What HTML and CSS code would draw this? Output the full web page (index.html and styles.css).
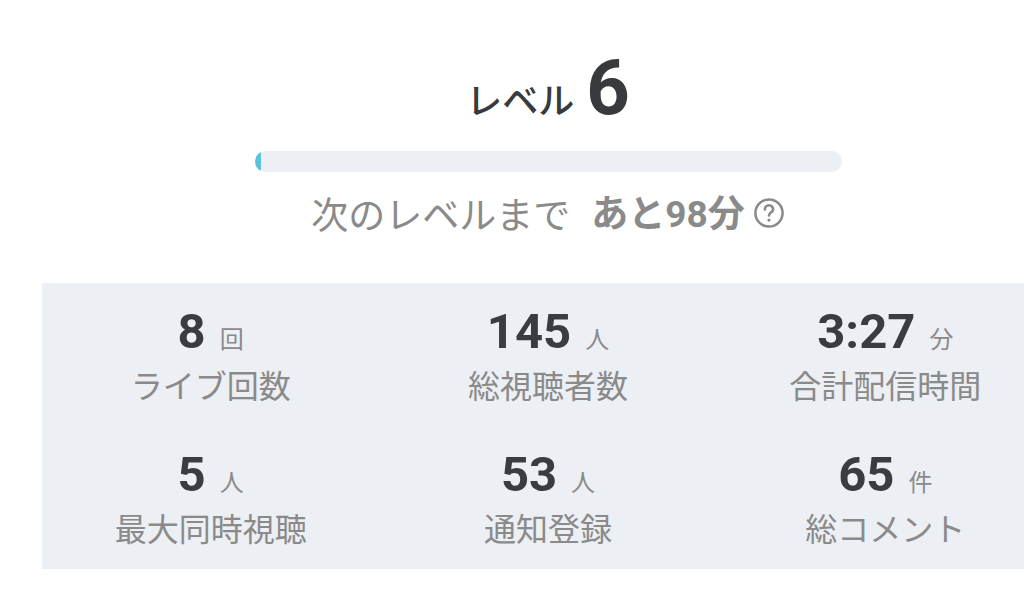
FILE: index.html
```html
<!DOCTYPE html>
<html lang="ja">
  <head>
    <meta charset="UTF-8" />
    <meta name="viewport" content="width=device-width, initial-scale=1.0" />
    <title>レベル</title>
    <link rel="stylesheet" href="styles.css">
  </head>
  <body>
    <div id="page">
      <h1 class="level"><span class="level-label">レベル</span><span class="level-num">6</span></h1>
      <div class="bar"><div class="bar-fill" style="width: 1%"></div></div>
      <p class="next">
        次のレベルまで<b>あと<span class="num">98</span>分</b>
        <svg class="help" viewBox="0 0 24 24" width="32" height="32">
          <circle cx="12" cy="12" r="10.2" fill="none" stroke="#8a8a8a" stroke-width="1.9"/>
          <path d="M8.9 9.3a3.1 3.1 0 0 1 6.2 0c0 2.1-3.1 2.3-3.1 4.6" fill="none" stroke="#8a8a8a" stroke-width="2" stroke-linecap="round"/>
          <circle cx="12" cy="17.3" r="1.2" fill="#8a8a8a"/>
        </svg>
      </p>
      <div class="stats">
        <div class="stat"><div class="value"><span class="num">8</span><span class="unit">回</span></div><div class="label">ライブ回数</div></div>
        <div class="stat"><div class="value"><span class="num">145</span><span class="unit">人</span></div><div class="label">総視聴者数</div></div>
        <div class="stat"><div class="value"><span class="num">3:27</span><span class="unit">分</span></div><div class="label">合計配信時間</div></div>
        <div class="stat"><div class="value"><span class="num">5</span><span class="unit">人</span></div><div class="label">最大同時視聴</div></div>
        <div class="stat"><div class="value"><span class="num">53</span><span class="unit">人</span></div><div class="label">通知登録</div></div>
        <div class="stat"><div class="value"><span class="num">65</span><span class="unit">件</span></div><div class="label">総コメント</div></div>
      </div>
    </div>
  </body>
</html>
```

FILE: styles.css
```css
body {
  margin: 0;
  background-color: #fff;
  overflow: hidden;
  font-family: "Noto Sans CJK JP", sans-serif;
}
#page {
  width: 1096px;
  display: flex;
  flex-direction: column;
  align-items: center;
  padding-top: 50px;
}
.level {
  margin: 0;
  display: flex;
  align-items: baseline;
  gap: 12px;
  color: #383a3d;
  line-height: 76px;
}
.level-label {
  font-size: 36px;
  font-weight: 500;
}
.level-num {
  font-family: Roboto, sans-serif;
  font-size: 76px;
  font-weight: 700;
}
.bar {
  margin-top: 15px;
  width: 587px;
  height: 21px;
  border-radius: 11px;
  background-color: #eceff3;
  overflow: hidden;
}
.bar-fill {
  height: 100%;
  min-width: 6px;
  border-radius: 3px;
  background-color: #5bc3d8;
}
.next {
  margin: 14px 0 0;
  display: flex;
  align-items: center;
  color: #8a8a8a;
  font-size: 37px;
  line-height: 50px;
}
.next b {
  margin-left: 21px;
  font-weight: 700;
}
.next .num {
  font-family: Roboto, sans-serif;
}
.help {
  margin-left: 8px;
}
.stats {
  margin-top: 43px;
  width: 1012px;
  display: grid;
  grid-template-columns: repeat(3, 1fr);
  padding: 23px 0 22px;
  background-color: #eceff3;
  row-gap: 45px;
}
.stat {
  display: flex;
  flex-direction: column;
  align-items: center;
}
.value {
  display: flex;
  align-items: baseline;
  gap: 14px;
  line-height: 52px;
}
.value .num {
  font-family: Roboto, sans-serif;
  font-weight: 700;
  font-size: 49px;
  color: #3a3c3f;
}
.value .unit {
  font-size: 24px;
  color: #8a8a8a;
}
.label {
  font-size: 32px;
  color: #8a8a8a;
  line-height: 40px;
}
```
